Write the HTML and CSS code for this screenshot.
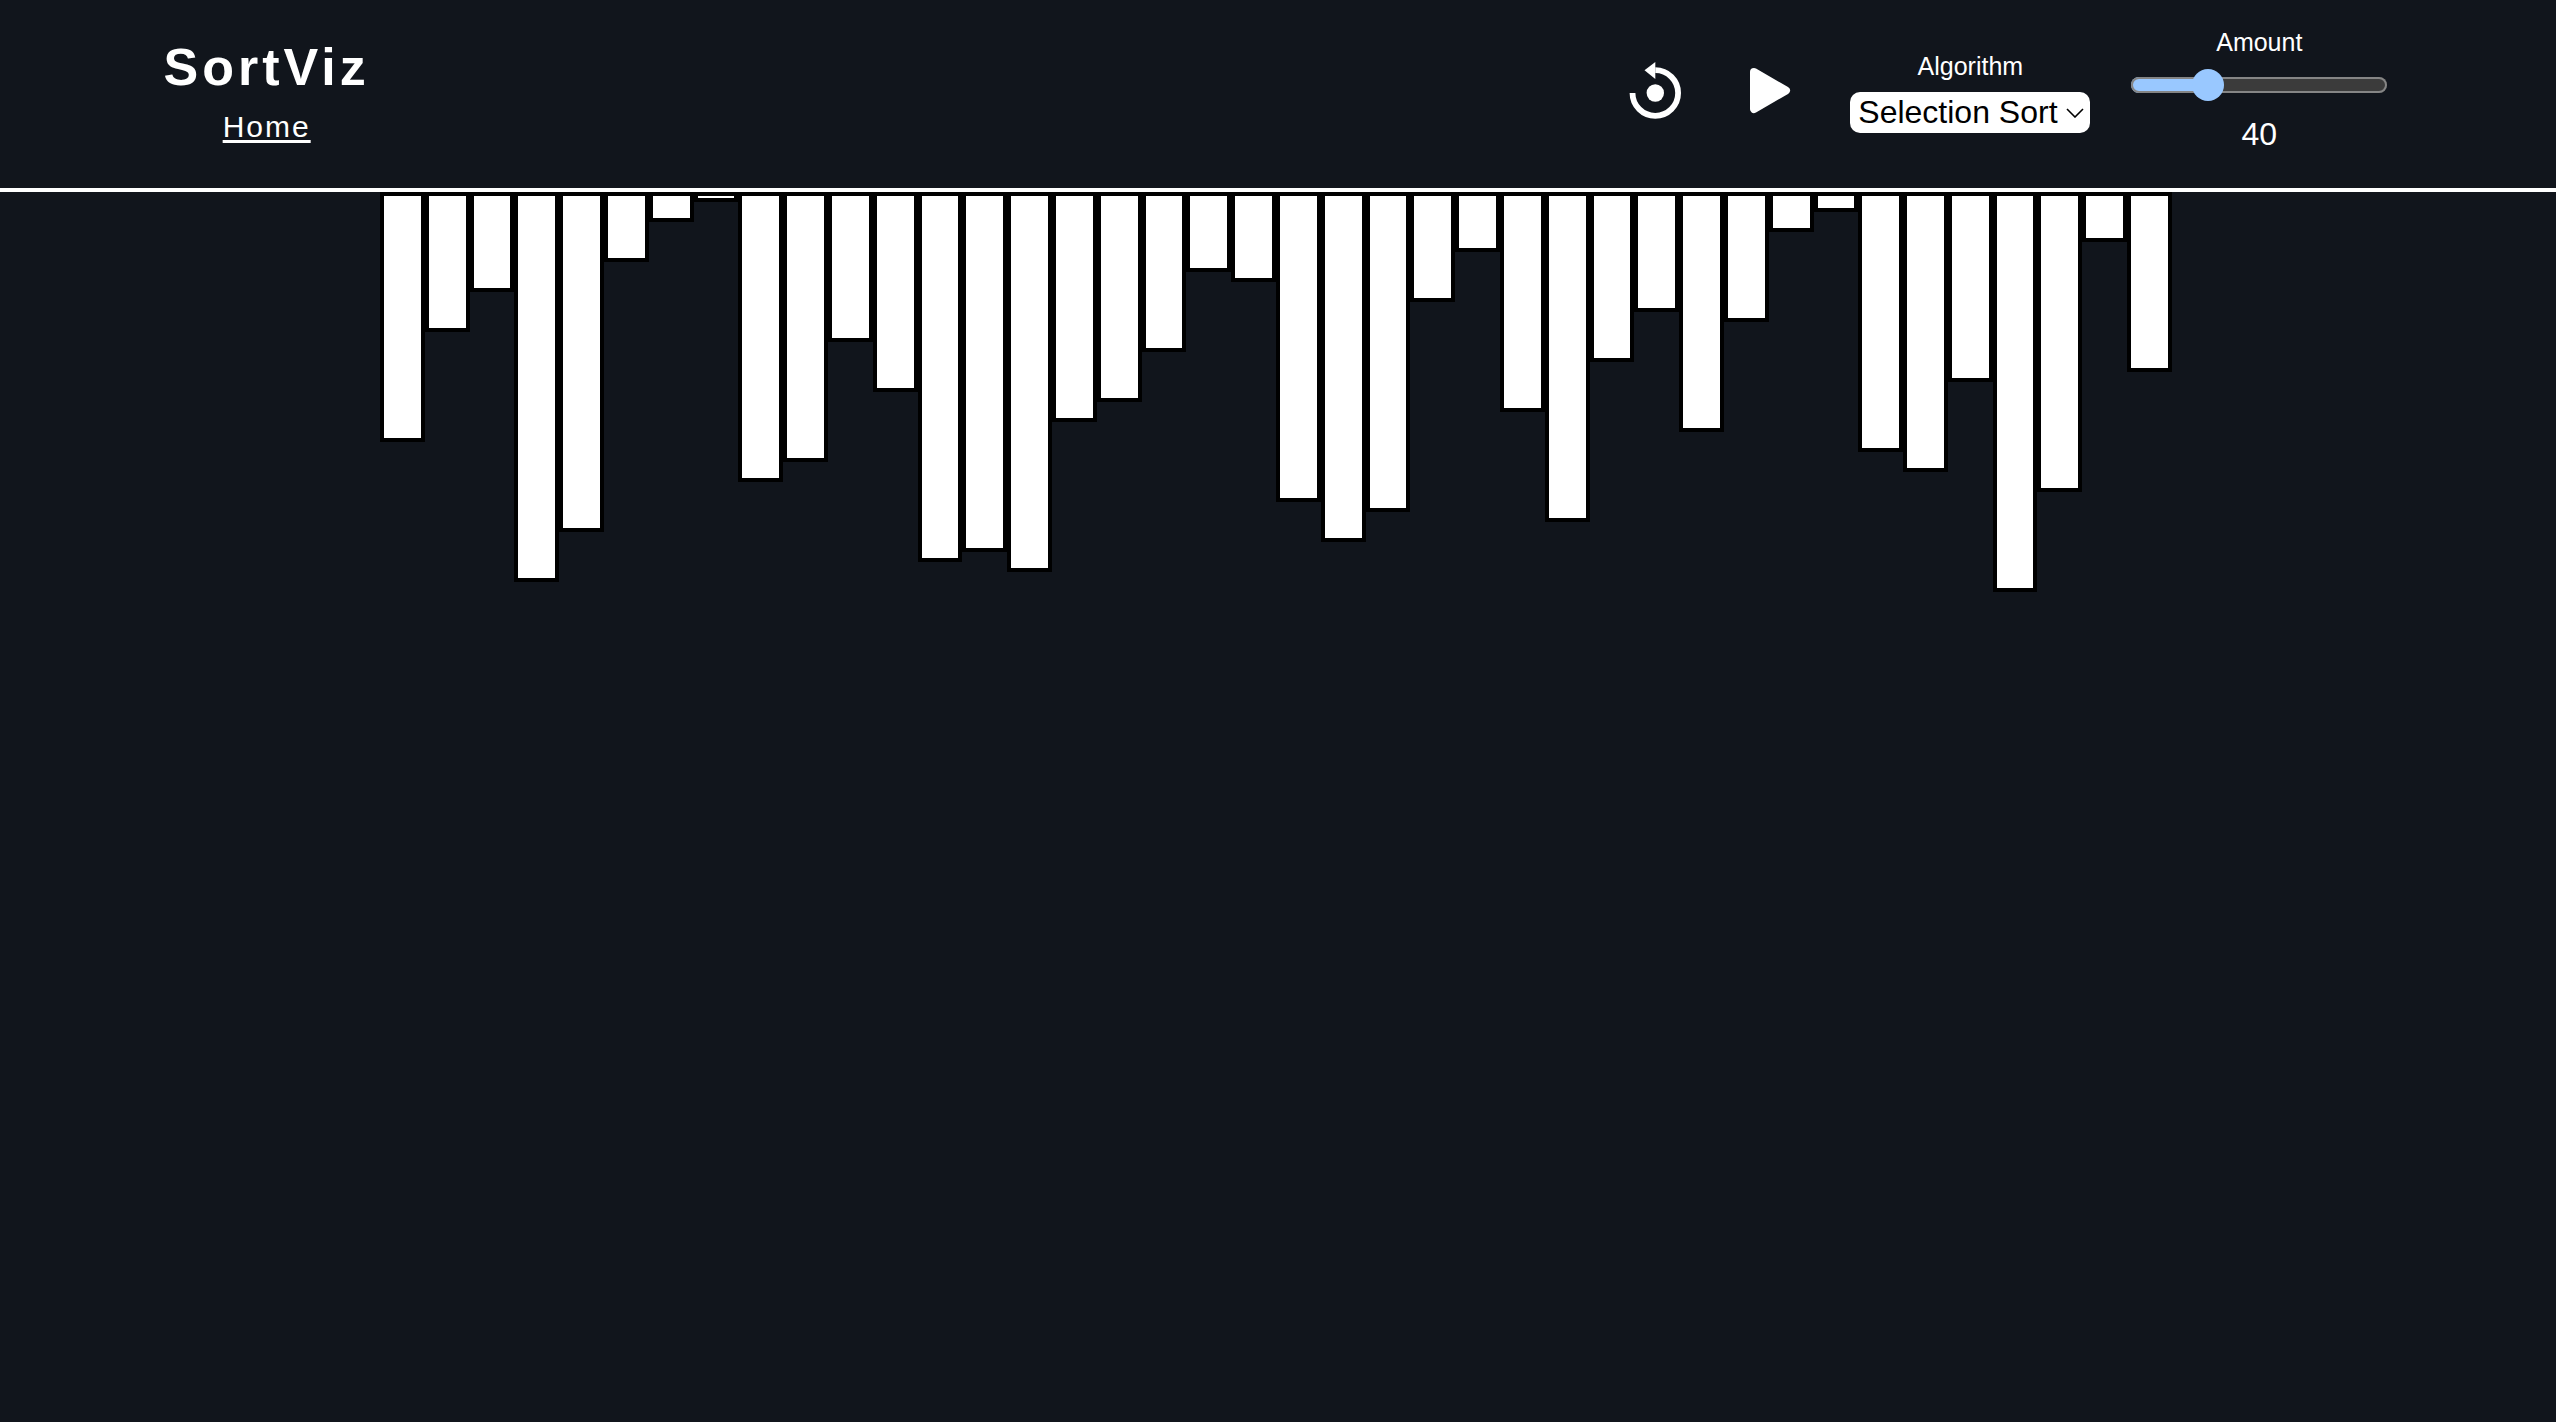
FILE: index.html
```html
<!DOCTYPE html>
<html lang="en">
<head>
  <meta charset="utf-8">
  <meta name="viewport" content="width=device-width, initial-scale=1">
  <title>SortViz</title>
  <link rel="stylesheet" href="styles.css">
</head>
<body>
  <header class="header">
    <div class="brand">
      <h1 class="brand-title">SortViz</h1>
      <a class="brand-link" href="#">Home</a>
    </div>
    <div class="controls">
      <div class="actions">
        <button class="icon-button" type="button" aria-label="Reset">
          <svg class="icon" viewBox="0 0 68 68" aria-hidden="true">
            <path d="M11.5 36A22.8 22.8 0 1 0 34.3 13.2" fill="none" stroke="currentColor" stroke-width="5.8"/>
            <path d="M34.3 5v17L23.5 13.3z" fill="currentColor"/>
            <circle cx="34.3" cy="36" r="8.7" fill="currentColor"/>
          </svg>
        </button>
        <button class="icon-button" type="button" aria-label="Play">
          <svg class="icon" viewBox="0 0 68 68" aria-hidden="true">
            <path d="M19 15L51 33.500L19 52z" fill="currentColor" stroke="currentColor" stroke-width="8" stroke-linejoin="round"/>
          </svg>
        </button>
      </div>
      <div class="field">
        <label class="field-label" for="algorithm">Algorithm</label>
        <div class="select-wrap">
          <select class="select" id="algorithm">
            <option>Selection Sort</option>
            <option>Bubble Sort</option>
            <option>Insertion Sort</option>
          </select>
          <svg class="chevron" viewBox="0 0 18 10" aria-hidden="true">
            <path d="M1 1l8 8 8-8" fill="none" stroke="currentColor" stroke-width="1.6"/>
          </svg>
        </div>
      </div>
      <div class="field field-amount">
        <label class="field-label" for="amount">Amount</label>
        <input class="slider" id="amount" type="range" min="10" max="120" value="40">
        <output class="amount" for="amount">40</output>
      </div>
    </div>
  </header>
  <main class="stage">
    <div class="bars">
      <div class="bar" style="height:250px"></div>
      <div class="bar" style="height:140px"></div>
      <div class="bar" style="height:100px"></div>
      <div class="bar" style="height:390px"></div>
      <div class="bar" style="height:340px"></div>
      <div class="bar" style="height:70px"></div>
      <div class="bar" style="height:30px"></div>
      <div class="bar" style="height:10px"></div>
      <div class="bar" style="height:290px"></div>
      <div class="bar" style="height:270px"></div>
      <div class="bar" style="height:150px"></div>
      <div class="bar" style="height:200px"></div>
      <div class="bar" style="height:370px"></div>
      <div class="bar" style="height:360px"></div>
      <div class="bar" style="height:380px"></div>
      <div class="bar" style="height:230px"></div>
      <div class="bar" style="height:210px"></div>
      <div class="bar" style="height:160px"></div>
      <div class="bar" style="height:80px"></div>
      <div class="bar" style="height:90px"></div>
      <div class="bar" style="height:310px"></div>
      <div class="bar" style="height:350px"></div>
      <div class="bar" style="height:320px"></div>
      <div class="bar" style="height:110px"></div>
      <div class="bar" style="height:60px"></div>
      <div class="bar" style="height:220px"></div>
      <div class="bar" style="height:330px"></div>
      <div class="bar" style="height:170px"></div>
      <div class="bar" style="height:120px"></div>
      <div class="bar" style="height:240px"></div>
      <div class="bar" style="height:130px"></div>
      <div class="bar" style="height:40px"></div>
      <div class="bar" style="height:20px"></div>
      <div class="bar" style="height:260px"></div>
      <div class="bar" style="height:280px"></div>
      <div class="bar" style="height:190px"></div>
      <div class="bar" style="height:400px"></div>
      <div class="bar" style="height:300px"></div>
      <div class="bar" style="height:50px"></div>
      <div class="bar" style="height:180px"></div>
    </div>
  </main>
</body>
</html>
```
FILE: styles.css
```css
* {
  box-sizing: border-box;
}

body {
  margin: 0;
  min-height: 100vh;
  background: #11151c;
  color: #fff;
  font-family: "Liberation Sans", Arial, Helvetica, sans-serif;
}

.header {
  display: flex;
  align-items: center;
  justify-content: space-between;
  padding: 26px 6.6% 32px 6.4%;
  border-bottom: 4px solid #fff;
}

.brand {
  display: flex;
  flex-direction: column;
  align-items: center;
  gap: 12px;
}

.brand-title {
  margin: 0;
  font-size: 52px;
  line-height: 60px;
  letter-spacing: 4px;
}

.brand-link {
  color: inherit;
  font-size: 30px;
  line-height: 36px;
  letter-spacing: 2px;
  text-decoration-thickness: 3px;
  text-underline-offset: 3px;
  text-decoration-skip-ink: none;
}

.controls {
  display: flex;
  align-items: center;
  gap: 41px;
}

.actions {
  display: flex;
  gap: 46px;
  margin-right: 6px;
}

.icon-button {
  display: block;
  padding: 0;
  border: 0;
  background: none;
  color: inherit;
  cursor: pointer;
}

.icon {
  display: block;
  width: 68px;
  height: 68px;
}

.field {
  display: flex;
  flex-direction: column;
  align-items: center;
  gap: 10px;
}

.field-amount {
  gap: 11px;
}

.field-label {
  font-size: 25px;
  line-height: 32px;
}

.select-wrap {
  position: relative;
  color: #000;
}

.select {
  display: block;
  width: 240px;
  height: 41px;
  padding: 0 8px;
  border: 0;
  border-radius: 10px;
  background: #fff;
  color: inherit;
  font: inherit;
  font-size: 32px;
  appearance: none;
}

.chevron {
  position: absolute;
  top: 16px;
  right: 6px;
  width: 18px;
  height: 10px;
  pointer-events: none;
}

.slider {
  width: 256px;
  height: 32px;
  margin: 0;
  background: none;
  appearance: none;
}

.slider::-webkit-slider-runnable-track {
  height: 16px;
  border-radius: 8px;
  background: linear-gradient(to right, #99c8ff 30%, #3b3b3b 30%);
  box-shadow: inset 0 0 0 2px #858585;
}

.slider::-webkit-slider-thumb {
  width: 32px;
  height: 32px;
  margin-top: -8px;
  border-radius: 50%;
  background: #99c8ff;
  appearance: none;
}

.amount {
  font-size: 32px;
  line-height: 44px;
}

.stage {
  padding-right: 4px;
}

.bars {
  display: flex;
  align-items: flex-start;
  max-width: 1792px;
  margin: 0 auto;
}

.bar {
  flex: 1;
  border: 4px solid #000;
  background: #fff;
}
```
